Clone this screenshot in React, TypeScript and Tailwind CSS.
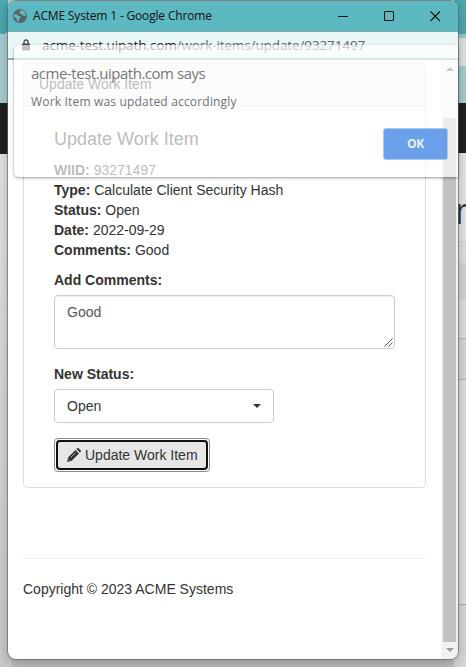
import React from "react";

const sans = "font-['Liberation_Sans',Arial,sans-serif]";
const ui = "font-['Open_Sans','Noto_Sans',sans-serif]";

function Backdrop() {
  return (
    <div className="flex h-full justify-between">
      <div className="flex w-[12px] flex-col">
        <div className="bg-[#a6cdd0]">
          <div className="h-[34px] w-[8px] rounded-br-[5px] bg-[#4ba7ae]" />
        </div>
        <div className="h-[69px] bg-[#a6cdd0]" />
        <div className="h-[51px] bg-[#202020]" />
        <div className="grow bg-gradient-to-b from-[#e2e2e2] to-[#c8c8c8]" />
      </div>
      <div className="flex w-[12px] flex-col">
        <div className="h-[34px] bg-[#4ba7ae]" />
        <div className="h-[4px] bg-[#9fc8cb]" />
        <div className="h-[28px] bg-[#d9e3e2]" />
        <div className="h-[37px] bg-[#a3cbce]" />
        <div className="h-[50px] bg-[#202020]" />
        <div className="h-[89px] border-b border-[#ccc] bg-[#e3e3e3]" />
        <div className="h-[21px] bg-[#dedede]" />
        <div className="h-[36px] bg-[#d2d2d2]" />
        <div className="h-[40px] border-b border-[#b3b3b3] bg-[#dcdcdc]" />
        <div className="h-[41px] border-b border-[#b3b3b3] bg-[#d5d5d5]" />
        <div className="h-[225px] border-b border-[#aaa] bg-[#dcdcdc]" />
        <div className="grow bg-[#d6d6d6]" />
      </div>
    </div>
  );
}

function TitleBar() {
  return (
    <div className={`flex h-[31px] shrink-0 items-center border-b border-[#79aeb2] bg-[#5cb9c2] pb-[1px] ${ui}`}>
      <svg className="ml-[5px] h-[14px] w-[14px] shrink-0" viewBox="0 0 14 14">
        <circle cx="7" cy="7" r="7" fill="#57656a" />
        <path d="M1 5.500 3.500 5.200 5 6.800l2 .4.6 1.500-1.400 1.300-.2 2.500-1.900-.8-.3-2L1.200 7.800zM6.500 1.200l1.300 1.300-1.500 1.300.6 1.200 1.800-.2 1.200 1.600 2.600.6.2-2-1.500-2.500-2-1.200z" fill="#62bac2" />
      </svg>
      <span className="ml-[6px] whitespace-nowrap text-[12px] leading-[16px] tracking-[-0.17px] text-[#111]">ACME System 1 - Google Chrome</span>
      <svg className="ml-auto mr-[14px] h-[14px] w-[106px] shrink-0" viewBox="0 0 106 14" fill="none" stroke="#111" strokeWidth="1.1">
        <path d="M0 7.500h10" />
        <rect x="46.500" y="2.500" width="9" height="9" rx="1" />
        <path d="m92.500 2.500 9.500 9.500m0-9.500-9.500 9.500" />
      </svg>
    </div>
  );
}

function AddressBar() {
  return (
    <div className={`flex h-[28px] shrink-0 items-start border-b-2 border-[#8fb0b3] bg-[#e9f7f7] ${ui}`}>
      <svg className="ml-[14px] mt-[7px] h-[12px] w-[8px]" viewBox="0 0 8 12">
        <path d="M2 5V3a2 2 0 0 1 4 0v2" fill="none" stroke="#444" strokeWidth="1.3" />
        <rect y="4.500" width="8" height="7" rx="1" fill="#444" />
      </svg>
      <span className="ml-[12px] mt-[4px] whitespace-nowrap text-[13.500px] leading-[18px] tracking-[-0.110px] text-[#5c6263]">
        <span className="text-[#202020]">acme-test.uipath.com</span>/work-items/update/93271497
      </span>
    </div>
  );
}

function Scrollbar() {
  return (
    <div className="flex w-[17px] shrink-0 flex-col items-center bg-[#f1f1f1]">
      <div className="mt-[7px] h-0 w-0 border-x-[4px] border-b-[4px] border-x-transparent border-b-[#555]" />
      <div className="mt-[47px] h-[524px] w-[13px] bg-[#c1c1c1]" />
      <div className="mt-[6px] h-0 w-0 border-x-[4px] border-t-[4px] border-x-transparent border-t-[#999]" />
    </div>
  );
}

function Field({ label, value }: { label: string; value: string }) {
  return (
    <div>
      <b>{label}:</b> {value}
    </div>
  );
}

function Page() {
  return (
    <main className={`flex min-w-0 grow flex-col pl-[15px] pr-[15px] pt-[3px] text-[14px] leading-[20px] text-[#333] ${sans}`}>
      <section className="h-[425px] w-[403px] rounded-[4px] border border-[#ddd]">
        <div className="h-[42px] border-b border-[#ddd] bg-[#f5f5f5] pl-[15px] pt-[10px]">Update Work Item</div>
        <div className="flex flex-col items-start pl-[30px]">
          <h1 className="mt-[23px] text-[18px] leading-[20px]">Update Work Item</h1>
          <div className="mt-[11px] whitespace-nowrap">
            <Field label="WIID" value="93271497" />
            <Field label="Type" value="Calculate Client Security Hash" />
            <Field label="Status" value="Open" />
            <Field label="Date" value="2022-09-29" />
            <Field label="Comments" value="Good" />
          </div>
          <label className="mt-[10px] font-bold">Add Comments:</label>
          <div className="mt-[5px] flex h-[54px] w-[341px] justify-between rounded-[4px] border border-[#ccc] pl-[12px] pt-[6px] text-[#555] shadow-[inset_0_1px_1px_rgba(0,0,0,0.075)]">
            Good
            <svg className="mb-[1px] mr-[1px] h-[9px] w-[9px] self-end" viewBox="0 0 9 9" stroke="#555" strokeWidth="1">
              <path d="m.5 8.500 8-8M4.500 8.500l4-4" />
            </svg>
          </div>
          <label className="mt-[15px] font-bold">New Status:</label>
          <div className="mt-[5px] flex h-[34px] w-[220px] items-center justify-between rounded-[4px] border border-[#ccc] pl-[12px] pr-[12px]">
            Open
            <span className="h-0 w-0 border-x-[4px] border-t-[4px] border-x-transparent border-t-[#333]" />
          </div>
          <button className="mt-[15px] flex h-[34px] w-[156px] items-center rounded-[4px] border border-[#8c8c8c] bg-white p-[1px]">
            <span className="flex h-full w-full items-center whitespace-nowrap rounded-[4px] border-2 border-[#101010] bg-[#e6e6e6] pl-[9px]">
              <svg className="mr-[4px] h-[14px] w-[14px]" viewBox="0 0 14 14" fill="#333">
                <path d="m0 14 1.200-4.700L8.500 2 12 5.500l-7.300 7.300zM9.400 1.100 10.200.3a1 1 0 0 1 1.400 0l2.100 2.100a1 1 0 0 1 0 1.400l-.8.8z" />
                <path d="m3.500 9.500 5-5M1.500 11.500l1 1" stroke="#e6e6e6" strokeWidth=".7" />
              </svg>
              Update Work Item
            </span>
          </button>
        </div>
      </section>
      <footer className="mt-[70px] w-[403px] border-t border-[#eee] pt-[20px]">Copyright © 2023 ACME Systems</footer>
    </main>
  );
}

function Alert() {
  return (
    <div className={`absolute left-[14px] top-[45px] flex h-[132px] w-[444px] flex-col rounded-l-[5px] bg-white/[.67] shadow-[0_1px_3px_rgba(0,0,0,0.4)] ${ui}`}>
      <div className="ml-[17px] mt-[18px] whitespace-nowrap text-[15px] leading-[21px] tracking-[-0.470px] text-[#777]">acme-test.uipath.com says</div>
      <div className="ml-[17px] mt-[9px] whitespace-nowrap text-[12px] leading-[18px] tracking-[0.180px] text-[#72727a]">Work Item was updated accordingly</div>
      <button className="ml-[369px] mt-[17px] h-[32px] w-[65px] rounded-[3px] border border-[#a9c9f5] bg-[#4589e5]/80 text-[12px] font-bold tracking-[-0.300px] text-[#e8f1ff]">OK</button>
    </div>
  );
}

export default function App() {
  return (
    <div className="relative h-[667px] w-[466px] overflow-hidden bg-[#bfbfbf]">
      <Backdrop />
      <div className={`absolute left-[455px] top-[188px] text-[36px] leading-[48px] text-[#333] ${sans}`}>m</div>
      <div className="absolute left-[8px] top-[1px] flex h-[658px] w-[450px] flex-col overflow-hidden rounded-[8px] bg-white shadow-[0_0_0_1px_rgba(100,100,100,0.65),0_4px_12px_rgba(0,0,0,0.25)]">
        <TitleBar />
        <AddressBar />
        <div className="flex min-h-0 grow">
          <Page />
          <Scrollbar />
        </div>
      </div>
      <Alert />
    </div>
  );
}
